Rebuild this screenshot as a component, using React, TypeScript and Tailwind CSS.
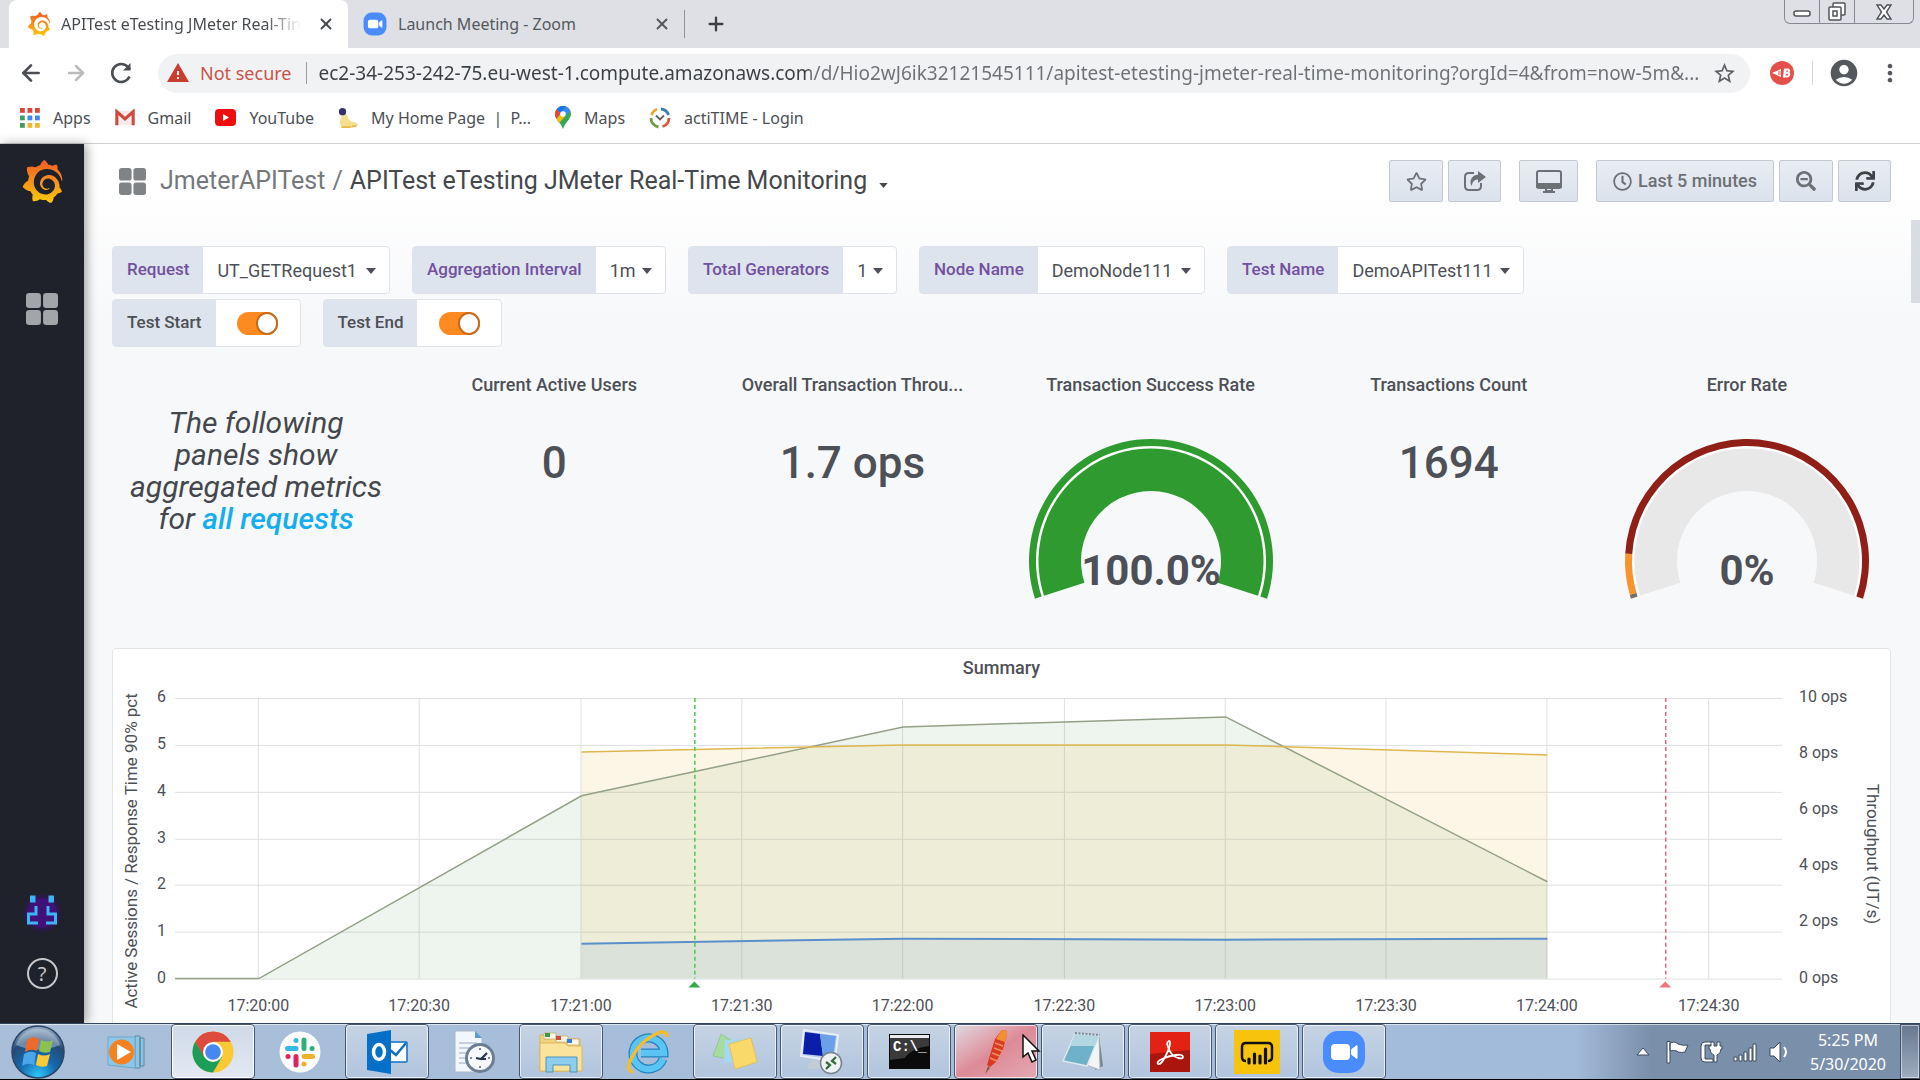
import type { ReactNode } from "react";
import { FaRegClock, FaRegStar, FaSearchMinus, FaSync } from "react-icons/fa";
import { SiGrafana } from "react-icons/si";
import { MdAccountCircle, MdMoreVert, MdStarBorder, MdWarning } from "react-icons/md";
import { ArrowLeft, ArrowRight, Plus, X } from "lucide-react";

const pageUrl =
  "ec2-34-253-242-75.eu-west-1.compute.amazonaws.com/d/Hio2wJ6ik32121545111/apitest-etesting-jmeter-real-time-monitoring?orgId=4&from=now-5m&...";

/* ---------- Shared marks ---------- */

function GrafanaMark({ size, id }: { size: number; id: string }) {
  return (
    <>
      <svg width="0" height="0" className="absolute" aria-hidden="true">
        <linearGradient id={id} x1="0" y1="0" x2="0" y2="1">
          <stop offset="0" stopColor="#f05a28" />
          <stop offset="1" stopColor="#fbca0a" />
        </linearGradient>
      </svg>
      <SiGrafana size={size} fill={`url(#${id})`} className="shrink-0" />
    </>
  );
}

function ZoomMark({ size }: { size: number }) {
  return (
    <svg width={size} height={size} viewBox="0 0 44 44" className="shrink-0" aria-hidden="true">
      <rect x="1" y="1" width="42" height="42" rx="15" fill="#4a8cff" />
      <rect x="9" y="14" width="19" height="16" rx="4" fill="#fff" />
      <path d="M29.500 19.500 35 15.500v13l-5.500-4z" fill="#fff" stroke="#fff" strokeLinejoin="round" />
    </svg>
  );
}

function SquaresIcon({ className }: { className: string }) {
  return (
    <svg viewBox="0 0 30 30" className={className} fill="currentColor" aria-hidden="true">
      <rect x="0" y="0" width="14" height="14" rx="3" />
      <rect x="16" y="0" width="14" height="14" rx="3" />
      <rect x="0" y="16" width="14" height="14" rx="3" />
      <rect x="16" y="16" width="14" height="14" rx="3" />
    </svg>
  );
}

function Caret({ className }: { className: string }) {
  return (
    <svg viewBox="0 0 10 6" className={className} fill="currentColor" aria-hidden="true">
      <path d="M0 0h10L5 6z" />
    </svg>
  );
}

/* ---------- Browser chrome ---------- */

function WindowButtons() {
  return (
    <div className="mr-[6px] flex h-6 items-stretch rounded-b-md border border-t-0 border-[#85888e] text-[#50545a]">
      <button aria-label="Minimize" className="flex w-[35px] items-center justify-center border-r border-[#85888e]">
        <svg width="18" height="16" viewBox="0 0 18 16" fill="#fff" stroke="currentColor" strokeWidth="1.5">
          <rect x="1" y="7" width="16" height="5" rx="2" />
        </svg>
      </button>
      <button aria-label="Restore" className="flex w-[35px] items-center justify-center border-r border-[#85888e]">
        <svg width="20" height="20" viewBox="0 0 20 20" fill="#fff" stroke="currentColor" strokeWidth="1.5">
          <rect x="6" y="1" width="12" height="12" rx="1" />
          <rect x="2" y="5" width="12" height="13" rx="1" />
          <rect x="6" y="9" width="4" height="5" />
        </svg>
      </button>
      <button aria-label="Close" className="flex w-[58px] items-center justify-center">
        <svg width="18" height="16" viewBox="0 0 18 16" fill="#fff" stroke="currentColor" strokeWidth="1.4">
          <path d="M2 1h4l3 4 3-4h4l-4.500 7L16 15h-4l-3-4-3 4H2l4.500-7z" />
        </svg>
      </button>
    </div>
  );
}

function TabStrip() {
  return (
    <div className="flex h-12 items-end justify-between bg-[#dee0e5]">
      <div className="flex h-12 items-center">
        <div className="ml-[9px] flex h-12 w-[339px] items-center rounded-t-lg bg-white pl-[18px] pr-3 text-[#45484c]">
          <GrafanaMark size={24} id="grafana-tab" />
          <button className="ml-[10px] w-[244px] overflow-hidden whitespace-nowrap text-left text-base">
            <span className="bg-linear-to-r from-[#45484c] from-85% to-transparent bg-clip-text text-transparent">
              APITest eTesting JMeter Real-Tin
            </span>
          </button>
          <button aria-label="Close tab" className="ml-3">
            <X size={18} strokeWidth={2.5} />
          </button>
        </div>
        <div className="flex h-12 w-[336px] items-center pl-[15px] text-[#55585d]">
          <ZoomMark size={24} />
          <button className="ml-[11px] w-[250px] whitespace-nowrap text-left text-base">
            Launch Meeting - Zoom
          </button>
          <button aria-label="Close tab" className="ml-[5px]">
            <X size={18} strokeWidth={2.5} />
          </button>
        </div>
        <div className="h-7 w-px bg-[#8f9297]" />
        <button aria-label="New tab" className="ml-5 text-[#3c3f43]">
          <Plus size={22} strokeWidth={2.5} />
        </button>
      </div>
      <div className="self-start">
        <WindowButtons />
      </div>
    </div>
  );
}

function Toolbar() {
  return (
    <div className="flex h-[50px] items-center bg-white text-[#5b5e63]">
      <button aria-label="Back" className="ml-[18px] text-[#4b4e52]">
        <ArrowLeft size={26} strokeWidth={2.5} />
      </button>
      <button aria-label="Forward" className="ml-5 text-[#babcbe]">
        <ArrowRight size={24} strokeWidth={2.5} />
      </button>
      <button aria-label="Reload" className="ml-5 text-[#4b4e52]">
        <svg width="26" height="26" viewBox="0 0 26 26" fill="none" stroke="currentColor" strokeWidth="2.6">
          <path d="M21.500 16.500A9 9 0 1 1 20 7l2 2.500" />
          <path d="M22.500 3v7.500H15z" fill="currentColor" stroke="none" />
        </svg>
      </button>
      <div className="ml-6 flex h-[39px] min-w-0 flex-1 items-center rounded-full bg-[#f1f2f4] pl-2 pr-[13px]">
        <MdWarning size={24} className="shrink-0 text-[#c93c30]" />
        <span className="ml-[10px] whitespace-nowrap text-lg text-[#c8544a]">Not secure</span>
        <div className="ml-[14px] h-[22px] w-px shrink-0 bg-[#9b9da1]" />
        <input
          aria-label="Address"
          type="text"
          defaultValue={pageUrl}
          className="ml-3 min-w-0 flex-1 bg-linear-to-r from-[#3b3e42] from-[490px] to-[#6d7074] to-[490px] bg-clip-text text-[19px] text-transparent outline-none"
        />
        <button aria-label="Bookmark this page" className="ml-2">
          <MdStarBorder size={25} />
        </button>
      </div>
      <button aria-label="Extension" className="ml-5">
        <svg width="24" height="24" viewBox="0 0 24 24">
          <circle cx="12" cy="12" r="12" fill="#e5504b" />
          <path d="M2 12l9-4v2.500H8v1h3v1H8v1h3V16z" fill="#fff" />
          <path
            d="M14 7.500h4q3 .5 1.500 4 1.500 1 .5 3-1 2-3 2h-4zM16.500 9.500l-.3 1.500h1.500l.3-1.500zm-.5 3.500-.3 1.500h2l.3-1.500z"
            fill="#fff"
            fillRule="evenodd"
          />
        </svg>
      </button>
      <div className="ml-[18px] h-6 w-px bg-[#d5d7da]" />
      <button aria-label="Profile" className="ml-[15px] text-[#55585c]">
        <MdAccountCircle size={32} />
      </button>
      <button aria-label="Menu" className="mr-4 ml-4 text-[#55585c]">
        <MdMoreVert size={28} />
      </button>
    </div>
  );
}

const appDots = ["#db4437", "#db4437", "#db4437", "#3f9d5c", "#4285f4", "#4285f4", "#3f9d5c", "#f1b62c", "#f1b62c"];

const bookmarks: { label: string; icon: ReactNode }[] = [
  {
    label: "Apps",
    icon: (
      <svg width="20" height="20" viewBox="0 0 20 20">
        {appDots.map((fill, i) => (
          <rect key={i} x={(i % 3) * 7.5} y={Math.floor(i / 3) * 7.5} width="4.8" height="4.8" fill={fill} />
        ))}
      </svg>
    ),
  },
  {
    label: "Gmail",
    icon: (
      <svg width="20" height="18" viewBox="0 0 22 18">
        <rect x="1" y="1" width="20" height="16" rx="1" fill="#f3ece9" />
        <path d="M2 17V2l9 8 9-8v15" fill="none" stroke="#d1483c" strokeWidth="3.4" />
      </svg>
    ),
  },
  {
    label: "YouTube",
    icon: (
      <svg width="21" height="17" viewBox="0 0 21 17">
        <rect width="21" height="17" rx="4" fill="#f00d0d" />
        <path d="M8 5v7l6-3.500z" fill="#fff" />
      </svg>
    ),
  },
  {
    label: "My Home Page\u00a0 |\u00a0 P...",
    icon: (
      <svg width="20" height="24" viewBox="0 0 22 24">
        <path d="M5 7q4-1 5 2 1 5 5 7 5 0 7 3-2 4-9 4-10 0-11-5 0-5 3-11z" fill="#f6df8e" />
        <circle cx="5" cy="5" r="4" fill="#34306b" />
        <path d="M3 21h11v2H4zM15 20h6l-1 2h-5z" fill="#e6b94a" />
      </svg>
    ),
  },
  {
    label: "Maps",
    icon: (
      <svg width="16" height="23" viewBox="0 0 16 23">
        <path d="M8 0a8 8 0 0 1 8 8c0 5-5 7-8 15C5 15 0 13 0 8a8 8 0 0 1 8-8z" fill="#34a853" />
        <path d="M1.500 3.500A8 8 0 0 1 11 .6L5.500 7z" fill="#1a73e8" />
        <path d="M1.500 3.500 5.500 7 1.500 13Q-1.500 8 1.500 3.500z" fill="#ea4335" />
        <path d="M11 .6A8 8 0 0 1 15.300 5L4 17l-2.500-4z" fill="#4285f4" />
        <path d="M10.500 10 4 17l-2.500-4L5.500 8z" fill="#fbbc04" />
        <circle cx="8" cy="8" r="2.8" fill="#fff" />
      </svg>
    ),
  },
  {
    label: "actiTIME - Login",
    icon: (
      <svg width="22" height="22" viewBox="0 0 22 22" fill="none" strokeWidth="2.8">
        <path d="M8 2.200A9 9 0 0 0 2.500 8" stroke="#e9a83a" />
        <path d="M12 2a9 9 0 0 1 7.500 6" stroke="#3d7fb5" />
        <path d="M20 11a9 9 0 0 1-6.500 8.500" stroke="#d8543e" />
        <path d="M2 11a9 9 0 0 0 7.500 9" stroke="#6f9c45" />
        <path d="m7 8.500 4 4 4-4" stroke="#5d6064" strokeWidth="1.8" />
      </svg>
    ),
  },
];

function BookmarksBar() {
  return (
    <nav className="flex h-[46px] items-center gap-6 border-b border-[#cfd1d4] bg-white pb-[6px] pl-5 text-base text-[#4c4f54]">
      {bookmarks.map((b) => (
        <a key={b.label} href="#" className="flex items-center gap-[13px] whitespace-nowrap">
          {b.icon}
          {b.label}
        </a>
      ))}
    </nav>
  );
}

/* ---------- Grafana ---------- */

function SideMenu() {
  return (
    <aside className="relative z-10 flex w-[84px] shrink-0 flex-col items-center bg-[#1f212b] shadow-[3px_0_10px_rgba(0,0,0,0.35)]">
      <a href="#" aria-label="Home" className="mt-4">
        <GrafanaMark size={43} id="grafana-side" />
      </a>
      <a href="#" aria-label="Dashboards" className="mt-[90px] text-[#a3a6a9]">
        <SquaresIcon className="h-8 w-8" />
      </a>
      <a href="#" aria-label="Account" className="mt-auto">
        <svg width="42" height="42" viewBox="0 0 42 42">
          <circle cx="21" cy="22" r="19" fill="#3d0f7a" opacity=".35" />
          <circle cx="21" cy="22" r="15" fill="#460f86" opacity=".8" />
          <path
            d="M10.500 6h2.500v4h-2.500zM29 6h2.500v4H29zM15 15v8H7.500v9H17M27 15v8h7.500v9H25"
            fill="none"
            stroke="#3fb4f4"
            strokeWidth="3"
          />
        </svg>
      </a>
      <a
        href="#"
        aria-label="Help"
        className="mt-[25px] mb-[34px] flex h-[31px] w-[31px] items-center justify-center rounded-full border-2 border-[#c6c8ca] text-xl leading-none text-[#c6c8ca]"
      >
        ?
      </a>
    </aside>
  );
}

function NavButton({ label, width, children }: { label: string; width: string; children: ReactNode }) {
  return (
    <button
      aria-label={label}
      className={`flex h-[42px] items-center justify-center rounded-xs border border-[#c3c9d3] bg-linear-to-b from-[#e9edf3] to-[#dbe2ec] text-[#6d7075] ${width}`}
    >
      {children}
    </button>
  );
}

function DashboardHeader() {
  return (
    <header className="flex h-[74px] items-center justify-between pr-[29px] pl-[35px]">
      <div className="flex items-center text-[25px]">
        <SquaresIcon className="h-[27px] w-[27px] text-[#808386]" />
        <a href="#" className="ml-[14px] text-[#75787c]">
          JmeterAPITest
        </a>
        <span className="mx-[7px] text-[#75787c]">/</span>
        <a href="#" className="flex items-center text-[#44474d]">
          APITest eTesting JMeter Real-Time Monitoring
          <Caret className="mt-2 ml-3 h-[5px] w-[9px]" />
        </a>
      </div>
      <div className="flex items-center">
        <div className="mr-[18px] flex gap-[5px]">
          <NavButton label="Mark as favorite" width="w-[54px]">
            <FaRegStar size={21} />
          </NavButton>
          <NavButton label="Share dashboard" width="w-[53px]">
            <svg width="22" height="20" viewBox="0 0 22 20" fill="none">
              <path d="M10 2H5Q1 2 1 6v9q0 4 4 4h8q4 0 4-4v-3" stroke="currentColor" strokeWidth="2" />
              <path d="M14 0 22 6l-8 6V8.500q-5-.5-6.500 6.500-2-4 0-7.500Q9.500 4 14 3.800z" fill="currentColor" />
            </svg>
          </NavButton>
        </div>
        <div className="mr-[18px] flex">
          <NavButton label="Cycle view mode" width="w-[59px]">
            <svg width="26" height="23" viewBox="0 0 26 23" fill="none" stroke="currentColor" strokeWidth="2">
              <rect x="1" y="1" width="24" height="17" rx="2" />
              <path d="M1 14h24v3H1z" fill="currentColor" />
              <path d="M10 18h6v3h-6zM7 22h12" />
            </svg>
          </NavButton>
        </div>
        <div className="flex gap-[5px]">
          <NavButton label="Last 5 minutes" width="w-[178px]">
            <FaRegClock size={19} />
            <span className="ml-[6px] text-lg font-medium">Last 5 minutes</span>
          </NavButton>
          <NavButton label="Zoom out" width="w-[54px]">
            <FaSearchMinus size={20} />
          </NavButton>
          <NavButton label="Refresh" width="w-[53px]">
            <FaSync size={20} className="text-[#3f4247]" />
          </NavButton>
        </div>
      </div>
    </header>
  );
}

const variables = [
  { id: "request", label: "Request", value: "UT_GETRequest1", width: "w-[278px]" },
  { id: "interval", label: "Aggregation Interval", value: "1m", width: "w-[254px]" },
  { id: "generators", label: "Total Generators", value: "1", width: "w-[209px]" },
  { id: "node", label: "Node Name", value: "DemoNode111", width: "w-[286px]" },
  { id: "test", label: "Test Name", value: "DemoAPITest111", width: "w-[297px]" },
];

function VariableBar() {
  return (
    <div className="flex flex-col gap-[5px] text-[17px]">
      <div className="flex gap-[22px]">
        {variables.map((v) => (
          <div key={v.id} className={`flex h-12 rounded-sm border border-[#dfe3e9] bg-white ${v.width}`}>
            <label
              htmlFor={v.id}
              className="flex items-center bg-[#dde4ed] px-[14px] font-medium whitespace-nowrap text-[#7350a0]"
            >
              {v.label}
            </label>
            <div className="relative flex min-w-0 flex-1 items-center pt-[2px] text-lg text-[#4d5056]">
              <select id={v.id} className="w-full appearance-none bg-transparent pl-[14px] outline-none">
                <option>{v.value}</option>
              </select>
              <Caret className="pointer-events-none absolute right-[13px] h-[6px] w-[10px]" />
            </div>
          </div>
        ))}
      </div>
      <div className="flex gap-[22px]">
        {["Test Start", "Test End"].map((label) => (
          <label key={label} className="flex h-12 rounded-sm border border-[#dfe3e9] bg-white">
            <span className="flex items-center bg-[#dde4ed] px-[14px] font-medium text-[#4d5056]">{label}</span>
            <span className="flex w-[84px] items-center justify-center">
              <input
                type="checkbox"
                defaultChecked
                className="flex h-[23px] w-[41px] appearance-none items-center justify-end rounded-full bg-[#ff8a1f] before:h-[23px] before:w-[22px] before:rounded-full before:border-2 before:border-[#c96a1c] before:bg-white"
              />
            </span>
          </label>
        ))}
      </div>
    </div>
  );
}

function arcPath(cx: number, cy: number, outer: number, inner: number, from: number, to: number) {
  const at = (r: number, deg: number) => {
    const rad = (deg * Math.PI) / 180;
    return `${(cx + r * Math.cos(rad)).toFixed(2)} ${(cy - r * Math.sin(rad)).toFixed(2)}`;
  };
  const large = from - to > 180 ? 1 : 0;
  return `M${at(outer, from)}A${outer} ${outer} 0 ${large} 1 ${at(outer, to)}L${at(inner, to)}A${inner} ${inner} 0 ${large} 0 ${at(inner, from)}Z`;
}

interface GaugeProps {
  value: string;
  fill: string;
  thresholds: { from: number; to: number; color: string }[];
}

function Gauge({ value, fill, thresholds }: GaugeProps) {
  return (
    <svg viewBox="0 0 250 165" className="mt-10 h-[165px] w-[250px]">
      <path d={arcPath(125, 122, 117, 70, 198, -18)} fill="#fff" />
      <path d={arcPath(125, 122, 112.5, 70, 198, -18)} fill={fill} />
      {thresholds.map((t) => (
        <path key={t.color} d={arcPath(125, 122, 122, 115, t.from, t.to)} fill={t.color} />
      ))}
      <text x="125" y="146" textAnchor="middle" className="fill-[#4d5056] text-[42px] font-bold">
        {value}
      </text>
    </svg>
  );
}

function StatPanel({ title, children }: { title: string; children: ReactNode }) {
  return (
    <section className="flex min-w-0 flex-col items-center">
      <h2 className="text-lg leading-7 font-medium whitespace-nowrap text-[#4d5056]">{title}</h2>
      {children}
    </section>
  );
}

function BigValue({ children }: { children: ReactNode }) {
  return <p className="mt-10 text-[44px] leading-12 font-medium text-[#4d5056]">{children}</p>;
}

function StatRow() {
  return (
    <div className="mt-6 grid h-[267px] grid-cols-6 gap-[10px]">
      <section className="flex justify-center pt-9">
        <p className="w-[258px] text-center text-[30px] leading-8 text-[#44474d] italic">
          The following panels show aggregated metrics for{" "}
          <span className="font-medium whitespace-nowrap text-[#14aef0]">all requests</span>
        </p>
      </section>
      <StatPanel title="Current Active Users">
        <BigValue>0</BigValue>
      </StatPanel>
      <StatPanel title="Overall Transaction Throu...">
        <BigValue>1.7 ops</BigValue>
      </StatPanel>
      <StatPanel title="Transaction Success Rate">
        <Gauge value="100.0%" fill="#2f9a2f" thresholds={[{ from: 198, to: -18, color: "#2f9a2f" }]} />
      </StatPanel>
      <StatPanel title="Transactions Count">
        <BigValue>1694</BigValue>
      </StatPanel>
      <StatPanel title="Error Rate">
        <Gauge
          value="0%"
          fill="#e7e8e7"
          thresholds={[
            { from: 198, to: 196, color: "#77716c" },
            { from: 196, to: 176.5, color: "#f7942c" },
            { from: 176.5, to: -18, color: "#8f1f17" },
          ]}
        />
      </StatPanel>
    </div>
  );
}

// Chart space: x runs from the panel's left edge, y from its top edge.
const plot = { left: 62, right: 1671, top: 50, bottom: 331 };
const timeTicks = [
  "17:20:00",
  "17:20:30",
  "17:21:00",
  "17:21:30",
  "17:22:00",
  "17:22:30",
  "17:23:00",
  "17:23:30",
  "17:24:00",
  "17:24:30",
];
const tickX = (i: number) => Math.round(146 + i * 161.3) - 0.5;

function SummaryChart() {
  return (
    <svg viewBox="0 0 1779 380" className="w-full text-base">
      {Array.from({ length: 7 }, (_, i) => {
        const y = Math.round(plot.bottom - (i * (plot.bottom - plot.top)) / 6) + 0.5;
        return (
          <g key={i}>
            <line x1={plot.left} x2={plot.right} y1={y} y2={y} stroke="#dddfe2" />
            <text x="53" y={y + 4} textAnchor="end" fill="#4d5056">
              {i}
            </text>
          </g>
        );
      })}
      {timeTicks.map((t, i) => (
        <g key={t}>
          <line x1={tickX(i)} x2={tickX(i)} y1={plot.top} y2={plot.bottom} stroke="#dddfe2" />
          <text x={tickX(i)} y="363" textAnchor="middle" fill="#4d5056">
            {t}
          </text>
        </g>
      ))}
      {[0, 2, 4, 6, 8, 10].map((v) => (
        <text key={v} x="1688" y={plot.bottom - v * 28.1 + 4} fill="#4d5056">
          {v} ops
        </text>
      ))}

      <path d="M146 331 469 148 791 79 1114 69 1436 234V331z" fill="#5a9e5a" opacity=".1" />
      <path d="M469 104 791 97h323l322 10v224H469z" fill="#eab839" opacity=".12" />
      <path d="M469 296 791 291l323 1 322-1v40H469z" fill="#5794f2" opacity=".12" />
      <g fill="none" strokeWidth="1.5">
        <path d="M62 331h84L469 148 791 79 1114 69 1436 234" stroke="#93a086" />
        <path d="M469 104 791 97h323l322 10" stroke="#dfb74f" />
        <path d="M469 296 791 291l323 1 322-1" stroke="#5a8fcc" strokeWidth="2" />
      </g>

      <line x1="582.5" x2="582.5" y1="50" y2="331" stroke="#4fc552" strokeWidth="1.5" strokeDasharray="4 3" />
      <path d="m576 340 6-6 6 6z" fill="#37a84a" />
      <line x1="1554.5" x2="1554.5" y1="50" y2="331" stroke="#e0676f" strokeWidth="1.5" strokeDasharray="4 3" />
      <path d="m1548 340 6-6 6 6z" fill="#ee7480" />

      <text transform="translate(24 361) rotate(-90)" fill="#4d5056" className="text-[17px]">
        Active Sessions / Response Time 90% pct
      </text>
      <text transform="translate(1756 136) rotate(90)" fill="#4d5056" className="text-[17px]">
        Throughput (UT/s)
      </text>
    </svg>
  );
}

function Dashboard() {
  return (
    <main className="relative min-w-0 flex-1 overflow-hidden bg-linear-to-b from-white from-5% to-[#f7f8fa] to-20% font-[Roboto,sans-serif]">
      <DashboardHeader />
      <div className="pt-7 pr-[29px] pl-7">
        <VariableBar />
        <StatRow />
        <section className="mt-[10px] rounded-sm border border-[#e3e5e9] bg-white">
          <h2 className="-mb-[34px] pt-[5px] text-center text-lg leading-7 font-medium text-[#4d5056]">Summary</h2>
          <SummaryChart />
        </section>
      </div>
      <div className="absolute top-[76px] right-0 h-[83px] w-[9px] bg-[#d9dce1]" />
    </main>
  );
}

/* ---------- Taskbar ---------- */

function StartOrb() {
  return (
    <svg width="54" height="54" viewBox="0 0 54 54">
      <defs>
        <radialGradient id="orb" cx=".5" cy=".95" r=".9">
          <stop offset="0" stopColor="#2cc6fa" />
          <stop offset=".4" stopColor="#1668ae" />
          <stop offset=".75" stopColor="#234a75" />
          <stop offset="1" stopColor="#8ba3bd" />
        </radialGradient>
      </defs>
      <circle cx="27" cy="27" r="26" fill="url(#orb)" stroke="#2c4564" strokeWidth="1.5" />
      <path d="M5 20a23 23 0 0 1 44 0q-22 9-44 0z" fill="#dfe9f3" opacity=".4" />
      <path d="M16 15q6-5 12-1l-2 12q-6-3-12 1z" fill="#ee6a2b" />
      <path d="M30 15q6 3 12 0l-3 12q-6 2-11-1z" fill="#8cc152" />
      <path d="M13 29q6-4 12-1l-2 12q-6-3-12 1z" fill="#49a6ea" />
      <path d="M27 29q6 3 12 0l-3 12q-6 2-11-1z" fill="#fbc935" />
    </svg>
  );
}

function MediaPlayerIcon() {
  return (
    <svg width="38" height="38" viewBox="0 0 38 38">
      <path d="M28 3h5v32h-5zM33 5h4v28h-4z" fill="#8fc4df" stroke="#467f9f" strokeWidth=".8" />
      <path d="M1 4h27v31L1 32z" fill="#8cc7e8" stroke="#71a7c9" />
      <circle cx="14.5" cy="19" r="12.5" fill="#f58220" />
      <path d="M10 11v16l14-8z" fill="#fff" />
    </svg>
  );
}

function ChromeIcon() {
  return (
    <svg width="42" height="42" viewBox="0 0 42 42">
      <circle cx="21" cy="21" r="20.5" fill="#fbc934" />
      <path d="M3.200 10.800A20.500 20.500 0 0 1 38.800 10.800H21L11.500 26.500z" fill="#dd4b3e" />
      <path d="M3.200 10.800A20.500 20.500 0 0 0 21 41.500L30 26 12 26z" fill="#1b9e58" />
      <circle cx="21" cy="21" r="10" fill="#fff" />
      <circle cx="21" cy="21" r="7.8" fill="#4688f1" />
    </svg>
  );
}

function SlackIcon() {
  return (
    <svg width="42" height="42" viewBox="0 0 42 42">
      <circle cx="21" cy="21" r="20.5" fill="#fff" />
      <g strokeWidth="5" strokeLinecap="round">
        <path d="M8.500 17.500H17M17 9.500v.1" stroke="#36b7e6" />
        <path d="M25 9v8.500M33 17.500h.1" stroke="#2eaf7c" />
        <path d="M25 25.500h8.500M25 33v.1" stroke="#ecb22e" />
        <path d="M17 25.500V34M9 25.500h.1" stroke="#e0245b" />
      </g>
    </svg>
  );
}

function OutlookIcon() {
  return (
    <svg width="42" height="44" viewBox="0 0 42 44">
      <rect x="22" y="12" width="19" height="20" rx="1" fill="#fff" stroke="#0f6fc0" strokeWidth="1.5" />
      <path d="m24 20 6 5 10-12" fill="none" stroke="#0f6fc0" strokeWidth="2.5" />
      <path d="M1 4 25 0v44L1 40z" fill="#0570c8" />
      <ellipse cx="13" cy="22" rx="5.5" ry="7.5" fill="none" stroke="#fff" strokeWidth="3.5" />
    </svg>
  );
}

function SchedulerIcon() {
  return (
    <svg width="42" height="44" viewBox="0 0 42 44">
      <path d="M2 1h20l7 7v34H2z" fill="#f3f7fb" stroke="#a9b9cc" />
      <path d="M22 1v7h7z" fill="#5a9bd8" />
      <path d="M6 13h18M6 18h14M6 23h10M6 28h8M6 33h8" stroke="#b3c4d8" strokeWidth="1.5" />
      <circle cx="27" cy="28" r="13.5" fill="#f7f9fb" stroke="#6c7d90" strokeWidth="3" />
      <path d="m23 28 5 1 6-6M27 29h6" stroke="#26384b" strokeWidth="2.2" fill="none" />
      <path d="M27 18v2M27 36v2M17 28h2M35 28h2" stroke="#526273" strokeWidth="1.5" />
    </svg>
  );
}

function ExplorerIcon() {
  return (
    <svg width="46" height="42" viewBox="0 0 46 42">
      <path d="M2 4h16l3 4h21v32H2z" fill="#f0d27c" stroke="#d6b35c" />
      <path d="M6 2h12v6H6zM18 5h12v6H18zM29 8h12v6H29z" fill="#fbf7ea" stroke="#c9ad68" strokeWidth=".8" />
      <path d="M7 2h5v4H7z" fill="#3a9b48" />
      <path d="M18 5h5v4h-5z" fill="#d24c3d" />
      <path d="M29 8h5v4h-5z" fill="#3882cc" />
      <path d="M2 12h25l3 3h14v25H2z" fill="#fae49b" stroke="#deb85f" />
      <path d="M8 41V26h31v15h-7v-7H15v7z" fill="#8fcdee" stroke="#4d93bb" />
    </svg>
  );
}

function InternetExplorerIcon() {
  return (
    <svg width="46" height="46" viewBox="0 0 46 46" fill="none">
      <path d="M38 30A15.500 15.500 0 1 1 39 24H16" stroke="#2383c2" strokeWidth="9" />
      <path d="M38 30A15.500 15.500 0 1 1 39 24H16" stroke="#5cc4f2" strokeWidth="6.5" />
      <path d="M42 8q0-7-9-4Q16 11 7 28q-7 14 1 15" stroke="#f3bd2d" strokeWidth="3.5" />
    </svg>
  );
}

function StickyNotesIcon() {
  return (
    <svg width="46" height="40" viewBox="0 0 46 40">
      <path d="m9 2 15 9-8 16L1 24z" fill="#a7dba0" stroke="#7fbd80" strokeWidth=".6" />
      <path d="m13 8 19-1 1 22-21 2z" fill="#a5d8f3" />
      <path d="m17 12 22-6 6 24-22 7z" fill="#fad96b" stroke="#e5bd48" strokeWidth=".8" />
    </svg>
  );
}

function RemoteDesktopIcon() {
  return (
    <svg width="44" height="46" viewBox="0 0 44 46">
      <path d="m12 31 13-1 2 10H8q0-4 4-9z" fill="#c3ccd6" />
      <path d="M4 1 38 6l-3 26L1 27z" fill="#bcd0ea" stroke="#e8eef5" strokeWidth="2" />
      <path d="M5 3 20 5l3 22-20-2z" fill="#0b1ea8" />
      <path d="m20 5 16 2-3 22-10-2z" fill="#6ba0e8" />
      <circle cx="31" cy="34" r="10.5" fill="#eef1f3" stroke="#77828d" strokeWidth="1.5" />
      <path d="m26 33 4 3-4 4M36 28l-4 4 4 3" fill="none" stroke="#2f6d36" strokeWidth="2.2" />
    </svg>
  );
}

function TerminalIcon() {
  return (
    <svg width="41" height="35" viewBox="0 0 41 35">
      <rect width="41" height="35" fill="#0b0b0b" />
      <path d="M1 4h39v8Q22 14 16 24L1 26z" fill="#3a3a3a" />
      <rect x="1" y="1" width="39" height="3" fill="#e9ebee" />
      <text x="4" y="17" className="fill-white font-[Liberation_Mono,monospace] text-sm font-bold">
        C:\_
      </text>
    </svg>
  );
}

function PenIcon() {
  return (
    <svg width="26" height="46" viewBox="0 0 26 46">
      <path d="M5 37 2 45l5-6z" fill="#8a5d3c" />
      <path d="M18 2q7-3 6 4l-4 14-7 13-6 5-3-2 3-10 5-16z" fill="#db3a22" />
      <path d="M18 2q7-3 6 4l-2 7-9-3z" fill="#f39132" />
      <path d="m12 14 8 3M11 19l8 3M9 24l8 3M7 29l7 3" stroke="#f0905c" strokeWidth="1.5" />
    </svg>
  );
}

function NotepadIcon() {
  return (
    <svg width="42" height="42" viewBox="0 0 42 42">
      <path d="m37 5 4 30-8 4z" fill="#79868f" />
      <path d="m37 5 1 34-16-6z" fill="#f2f4f5" stroke="#a5adb4" strokeWidth=".8" />
      <path d="M13 3 37 5 25 35 1 30z" fill="#6fb1c8" stroke="#dfe8ed" strokeWidth="1.5" />
      <path d="M13 3 37 5l-4 10L8 15z" fill="#b3d7e2" />
      <path d="M13 2 38 4" stroke="#7f8a92" strokeWidth="2" strokeDasharray="2 1.5" />
    </svg>
  );
}

function AcrobatIcon() {
  return (
    <svg width="40" height="40" viewBox="0 0 40 40">
      <rect width="40" height="40" fill="#e32214" />
      <path d="M0 22 40 18v22H0z" fill="#aa150d" />
      <path
        d="M19 9q-3 1-1 6 3 9 10 11 5 1 5-1 0-3-7-2-8 1-14 4-6 3-4 5 3 1 7-7 5-9 5-14 0-2-1-2z"
        fill="none"
        stroke="#fff"
        strokeWidth="1.8"
      />
    </svg>
  );
}

function PowerBiIcon() {
  return (
    <svg width="46" height="44" viewBox="0 0 46 44">
      <rect width="46" height="44" fill="#f7c30d" />
      <path d="M12 31q-4 0-4-4V17q0-4 4-4h22q4 0 4 4v10q0 4-4 4" fill="none" stroke="#111" strokeWidth="2.5" />
      <path d="M15 29v4M20.500 24v9M26 26v7M31.500 19v14" stroke="#111" strokeWidth="3.2" strokeLinecap="round" />
    </svg>
  );
}

const tasks = [
  { name: "Windows Media Player", icon: <MediaPlayerIcon /> },
  { name: "Google Chrome", icon: <ChromeIcon />, state: "active" },
  { name: "Slack", icon: <SlackIcon /> },
  { name: "Outlook", icon: <OutlookIcon />, state: "open" },
  { name: "Task Scheduler", icon: <SchedulerIcon /> },
  { name: "Windows Explorer", icon: <ExplorerIcon />, state: "open" },
  { name: "Internet Explorer", icon: <InternetExplorerIcon /> },
  { name: "Sticky Notes", icon: <StickyNotesIcon />, state: "open" },
  { name: "Remote Desktop", icon: <RemoteDesktopIcon />, state: "open" },
  { name: "Command Prompt", icon: <TerminalIcon />, state: "open" },
  { name: "Pen", icon: <PenIcon />, state: "hover" },
  { name: "Notepad", icon: <NotepadIcon />, state: "open" },
  { name: "Adobe Reader", icon: <AcrobatIcon />, state: "open" },
  { name: "Power BI", icon: <PowerBiIcon />, state: "open" },
  { name: "Zoom", icon: <ZoomMark size={44} />, state: "open" },
];

const taskStyles: Record<string, string> = {
  idle: "border-transparent",
  open: "border-[#46586f] bg-linear-to-b from-[#c6d3e4] to-[#b1c5de] inset-ring inset-ring-white/70",
  active: "border-[#46586f] bg-linear-to-b from-[#cfd9e8] to-[#e2e9f3] inset-ring inset-ring-white",
  hover: "border-[#46586f] bg-linear-to-br from-[#dcd9e2] via-[#dd8a97] to-[#e3a9b3] inset-ring inset-ring-white/70",
};

function TrayIcon({ label, children }: { label: string; children: ReactNode }) {
  return (
    <button aria-label={label} className="flex w-[34px] items-center justify-center">
      <svg width="24" height="24" viewBox="0 0 24 24" fill="#fff" stroke="#3c4c60" strokeWidth="1">
        {children}
      </svg>
    </button>
  );
}

function Taskbar() {
  return (
    <footer className="relative z-20 flex h-[57px] shrink-0 border-t border-b border-t-[#33475f] border-b-black bg-linear-to-r from-[#a9bfd9] from-0% via-[#a3bbdb] via-82% to-[#7a8fa9] to-86% inset-shadow-[0_1px_0_rgba(255,255,255,0.6)]">
      <button aria-label="Start" className="flex w-[76px] items-center justify-center">
        <StartOrb />
      </button>
      <div className="ml-2 flex gap-[3px]">
        {tasks.map((t) => (
          <button
            key={t.name}
            aria-label={t.name}
            className={`relative flex w-[84px] items-center justify-center rounded-sm border ${taskStyles[t.state ?? "idle"]}`}
          >
            {t.icon}
            {t.state === "hover" && (
              <svg width="19" height="29" viewBox="0 0 19 29" className="absolute top-[9px] -right-1">
                <path d="M1 1v22l5-4 4 9 4-2-4-9h7z" fill="#fff" stroke="#111" strokeWidth="1.5" />
              </svg>
            )}
          </button>
        ))}
      </div>
      <div className="ml-auto flex">
        <TrayIcon label="Show hidden icons">
          <path d="m6 15 6-7 6 7z" />
        </TrayIcon>
        <TrayIcon label="Action Center">
          <path d="M2 1.500h3V23H2zM5 3q4-2 7 0l1 1q5 2 10 1l-3 7q-3 1-7 0l-1-1q-4-1-7 0z" />
        </TrayIcon>
        <TrayIcon label="Power">
          <path d="M6 2h8v3H6v14h8v3H6q-4 0-4-4V6q0-4 4-4z" />
          <path d="M12 6V2h3v4h3V2h3v4h2v3h-1q0 5-4 6v7h-3v-7q-4-1-4-6h-1V6z" />
        </TrayIcon>
        <TrayIcon label="Network">
          <path d="M1 17h3v4H1zM6 15h3v6H6zM11 12h3v9h-3zM16 8h3v13h-3zM20 4h3v17h-3z" />
        </TrayIcon>
        <TrayIcon label="Volume">
          <path d="M3 8h4l6-6v20l-6-6H3z" />
          <path d="M17 7q4 5 0 10" fill="none" stroke="#fff" strokeWidth="2" />
        </TrayIcon>
        <button className="w-[104px] text-center text-base leading-6 text-white">
          5:25 PM
          <br />
          5/30/2020
        </button>
        <button
          aria-label="Show desktop"
          className="w-5 border border-[#42526a] bg-linear-to-b from-[#67788f] to-[#9fadbf] inset-ring inset-ring-white/50"
        />
      </div>
    </footer>
  );
}

export default function App() {
  return (
    <div className="flex h-screen flex-col overflow-hidden bg-white font-[Noto_Sans,sans-serif]">
      <TabStrip />
      <Toolbar />
      <BookmarksBar />
      <div className="flex min-h-0 flex-1">
        <SideMenu />
        <Dashboard />
      </div>
      <Taskbar />
    </div>
  );
}
